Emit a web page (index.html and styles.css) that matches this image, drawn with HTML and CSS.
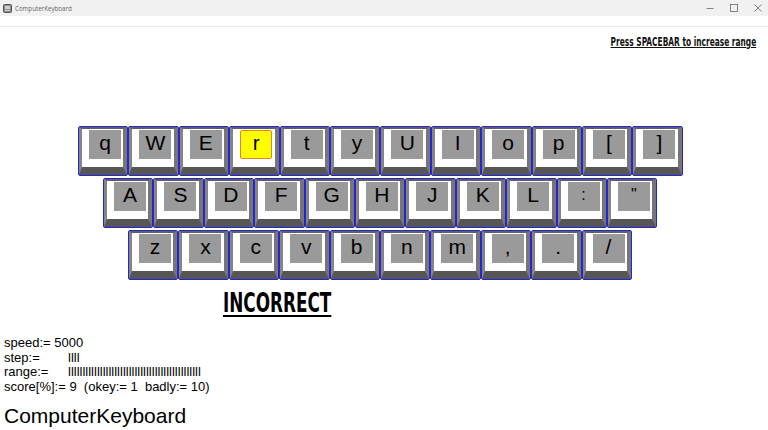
FILE: index.html
```html
<!DOCTYPE html>
<html lang="en">
<head>
<meta charset="utf-8">
<title>ComputerKeyboard</title>
<link rel="stylesheet" href="styles.css">
</head>
<body>
<div class="window">
  <header class="titlebar">
    <div class="title-left">
      <svg class="app-icon" width="9" height="9" viewBox="0 0 9 9">
        <rect x="0.5" y="0.5" width="8" height="8" rx="1" fill="#8a8a8a" stroke="#555" stroke-width="1"/>
        <rect x="2" y="2" width="5" height="3" fill="#d0d0d0"/>
        <rect x="2" y="6" width="5" height="1" fill="#d0d0d0"/>
      </svg>
      <span class="title-text">ComputerKeyboard</span>
    </div>
    <div class="controls">
      <svg class="ctl" width="10" height="10" viewBox="0 0 10 10"><line x1="1.5" y1="5.5" x2="8.5" y2="5.5" stroke="#666" stroke-width="0.8"/></svg>
      <svg class="ctl" width="10" height="10" viewBox="0 0 10 10"><rect x="1.5" y="1.5" width="7" height="7" fill="none" stroke="#666" stroke-width="0.8"/></svg>
      <svg class="ctl" width="10" height="10" viewBox="0 0 10 10"><path d="M1.5 1.5 L8.5 8.5 M8.5 1.5 L1.5 8.5" stroke="#666" stroke-width="0.8"/></svg>
    </div>
  </header>
  <div class="sep"></div>
  <main class="content">
    <div class="hint"><span class="hint-text">Press SPACEBAR to increase range</span></div>

    <div class="keyboard">
      <div class="row row1">
        <div class="key"><div class="cap"><span class="lbl">q</span></div></div>
        <div class="key"><div class="cap"><span class="lbl">W</span></div></div>
        <div class="key"><div class="cap"><span class="lbl">E</span></div></div>
        <div class="key"><div class="cap"><span class="lbl active">r</span></div></div>
        <div class="key"><div class="cap"><span class="lbl">t</span></div></div>
        <div class="key"><div class="cap"><span class="lbl">y</span></div></div>
        <div class="key"><div class="cap"><span class="lbl">U</span></div></div>
        <div class="key"><div class="cap"><span class="lbl">I</span></div></div>
        <div class="key"><div class="cap"><span class="lbl">o</span></div></div>
        <div class="key"><div class="cap"><span class="lbl">p</span></div></div>
        <div class="key"><div class="cap"><span class="lbl">[</span></div></div>
        <div class="key"><div class="cap"><span class="lbl">]</span></div></div>
      </div>
      <div class="row row2">
        <div class="key"><div class="cap"><span class="lbl">A</span></div></div>
        <div class="key"><div class="cap"><span class="lbl">S</span></div></div>
        <div class="key"><div class="cap"><span class="lbl">D</span></div></div>
        <div class="key"><div class="cap"><span class="lbl">F</span></div></div>
        <div class="key"><div class="cap"><span class="lbl">G</span></div></div>
        <div class="key"><div class="cap"><span class="lbl">H</span></div></div>
        <div class="key"><div class="cap"><span class="lbl">J</span></div></div>
        <div class="key"><div class="cap"><span class="lbl">K</span></div></div>
        <div class="key"><div class="cap"><span class="lbl">L</span></div></div>
        <div class="key"><div class="cap"><span class="lbl small">:</span></div></div>
        <div class="key"><div class="cap"><span class="lbl small">"</span></div></div>
      </div>
      <div class="row row3">
        <div class="key"><div class="cap"><span class="lbl">z</span></div></div>
        <div class="key"><div class="cap"><span class="lbl">x</span></div></div>
        <div class="key"><div class="cap"><span class="lbl">c</span></div></div>
        <div class="key"><div class="cap"><span class="lbl">v</span></div></div>
        <div class="key"><div class="cap"><span class="lbl">b</span></div></div>
        <div class="key"><div class="cap"><span class="lbl">n</span></div></div>
        <div class="key"><div class="cap"><span class="lbl">m</span></div></div>
        <div class="key"><div class="cap"><span class="lbl">,</span></div></div>
        <div class="key"><div class="cap"><span class="lbl">.</span></div></div>
        <div class="key"><div class="cap"><span class="lbl">/</span></div></div>
      </div>
    </div>

    <div class="verdict"><span class="verdict-text">INCORRECT</span></div>

    <div class="stats">
      <div class="stat">speed:= 5000</div>
      <div class="stat"><span class="stat-label">step:=</span><span class="bars">llll</span></div>
      <div class="stat"><span class="stat-label">range:=</span><span class="bars">llllllllllllllllllllllllllllllllllllllllllllll</span></div>
      <div class="stat pre">score[%]:= 9  (okey:= 1  badly:= 10)</div>
    </div>

    <div class="app-title">ComputerKeyboard</div>
  </main>
</div>
</body>
</html>
```

FILE: styles.css
```css
html, body {
  margin: 0;
  padding: 0;
  background: #ffffff;
}

body {
  width: 768px;
  height: 430px;
  overflow: hidden;
  font-family: "Liberation Sans", Arial, sans-serif;
  color: #000;
}

.titlebar {
  height: 16px;
  background: #f1f1f1;
  display: flex;
  align-items: center;
  justify-content: space-between;
}

.title-left {
  display: flex;
  align-items: center;
  gap: 3px;
  padding-left: 3px;
}

.app-icon {
  display: block;
}

.title-text {
  font-family: "Open Sans", "Liberation Sans", sans-serif;
  font-size: 6.2px;
  color: #666;
  line-height: 9px;
}

.controls {
  display: flex;
  gap: 14px;
  padding-right: 5px;
}

.ctl {
  display: block;
}

.sep {
  margin-top: 10px;
  height: 1px;
  background: #e9e9e9;
}

.hint {
  margin-top: 5px;
  height: 12px;
  text-align: right;
  padding-right: 12px;
}

.hint-text {
  display: inline-block;
  font-family: "DejaVu Sans Condensed", "Liberation Sans", sans-serif;
  font-weight: bold;
  font-size: 11.5px;
  line-height: 12px;
  text-decoration: underline;
  text-decoration-thickness: 1px;
  text-underline-offset: 1px;
  color: #111;
  transform: scaleX(0.72);
  transform-origin: right center;
}

.keyboard {
  margin-top: 82px;
  display: flex;
  flex-direction: column;
  gap: 2px;
}

.row {
  display: flex;
}

.row1 { padding-left: 78px; }
.row2 { padding-left: 103px; }
.row3 { padding-left: 128px; }

.key {
  width: 50.4px;
  height: 50px;
  box-sizing: border-box;
  border: 1px solid #2424d8;
  border-radius: 2px;
  background: #fff;
}

.cap {
  height: 100%;
  box-sizing: border-box;
  background: #ffffff;
  border-top: 2px solid #5f5f5f;
  border-left: 3px solid #858585;
  border-right: 4px solid #767676;
  border-bottom: 8px solid #565656;
  padding: 1px 0 0 7px;
}

.lbl {
  display: block;
  width: 32px;
  height: 29px;
  background: #9a9a9a;
  text-align: center;
  font-size: 21px;
  line-height: 25px;
  color: #000;
  box-sizing: border-box;
}

.lbl.small {
  font-size: 16px;
}

.lbl.active {
  background: #ffff00;
  border: 1px solid #de8a2a;
  border-radius: 2px;
  line-height: 23px;
}

.verdict {
  margin-top: 9px;
  padding-left: 223px;
  height: 28px;
}

.verdict-text {
  display: inline-block;
  font-family: "DejaVu Sans Condensed", "Liberation Sans", sans-serif;
  font-weight: bold;
  font-size: 26px;
  line-height: 28px;
  text-decoration: underline;
  text-decoration-thickness: 2px;
  text-underline-offset: 3px;
  color: #000;
  transform: scaleX(0.72);
  transform-origin: left center;
}

.stats {
  margin-top: 19px;
  padding-left: 4px;
  font-size: 13px;
  line-height: 14.67px;
}

.stat-label {
  display: inline-block;
  width: 64px;
}

.pre {
  white-space: pre;
}

.app-title {
  margin-top: 9px;
  padding-left: 4px;
  font-size: 21px;
  line-height: 24px;
}
```
